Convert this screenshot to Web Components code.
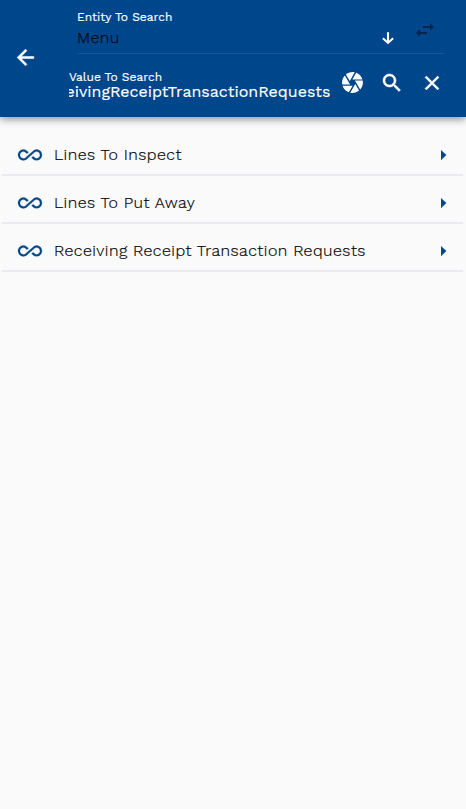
<!DOCTYPE html>
<html lang="en">
<head>
<meta charset="utf-8">
<title>Menu search</title>
<style>
html,body{margin:0;height:100%;background:#fafafa;font-family:"Work Sans",Inter,"Liberation Sans",sans-serif}
</style>
</head>
<body>
<search-page></search-page>
<script>
const ICONS = {
  back:'<path stroke="currentColor" stroke-width=".5" d="M20 11H7.83l5.59-5.59L12 4l-8 8 8 8 1.41-1.41L7.83 13H20v-2z"/>',
  down:'<path d="M12 6.2v10.6M6.9 12.2l5.1 4.7 5.1-4.7" fill="none" stroke="currentColor" stroke-width="2.1"/>',
  swap:'<path d="M6.99 11L3 15l3.99 4v-3H14v-2H6.99v-3zM21 9l-3.99-4v3H10v2h7.01v3L21 9z"/>',
  camera:'<path d="M9.4 10.5l4.77-8.26C13.47 2.09 12.75 2 12 2c-2.4 0-4.6.85-6.32 2.25l3.66 6.35.06-.1zM21.54 9c-.92-2.92-3.15-5.26-6-6.34L11.88 9h9.66zm.26 1h-7.49l.29.5 4.76 8.25C21 16.97 22 14.61 22 12c0-.69-.07-1.35-.2-2zM8.54 12l-3.9-6.75C3.01 7.03 2 9.39 2 12c0 .69.07 1.35.2 2h7.49l-1.15-2zm-6.08 3c.92 2.92 3.15 5.26 6 6.34L12.12 15H2.46zm11.27 0l-3.9 6.76c.7.15 1.42.24 2.17.24 2.4 0 4.6-.85 6.32-2.25l-3.66-6.35-.93 1.6z"/>',
  search:'<path stroke="currentColor" stroke-width=".5" d="M15.5 14h-.79l-.28-.27C15.41 12.59 16 11.11 16 9.5 16 5.91 13.09 3 9.5 3S3 5.91 3 9.5 5.91 16 9.5 16c1.61 0 3.09-.59 4.23-1.57l.27.28v.79l5 4.99L20.49 19l-4.99-5zm-6 0C7.01 14 5 11.99 5 9.5S7.01 5 9.5 5 14 7.01 14 9.5 11.99 14 9.5 14z"/>',
  close:'<path stroke="currentColor" stroke-width=".4" d="M19 6.41L17.59 5 12 10.59 6.41 5 5 6.41 10.59 12 5 17.59 6.41 19 12 13.41 17.59 19 19 17.59 13.41 12z"/>',
  infinity:'<path stroke="currentColor" stroke-width=".2" d="M18.6 6.62c-1.44 0-2.8.56-3.77 1.53L12 10.66 10.48 12h.01L7.8 14.39c-.64.64-1.49.99-2.4.99-1.87 0-3.39-1.51-3.39-3.38S3.53 8.62 5.4 8.62c.91 0 1.76.35 2.44 1.03l1.13 1 1.51-1.34L9.22 8.2C8.2 7.18 6.84 6.62 5.4 6.62 2.42 6.62 0 9.04 0 12s2.42 5.38 5.4 5.38c1.44 0 2.8-.56 3.77-1.53l2.83-2.5.01.01L13.52 12h-.01l2.69-2.39c.64-.64 1.49-.99 2.4-.99 1.87 0 3.39 1.51 3.39 3.38s-1.52 3.38-3.39 3.38c-.9 0-1.76-.35-2.44-1.03l-1.14-1.01-1.51 1.34 1.27 1.12c1.02 1.01 2.37 1.57 3.82 1.57 2.98 0 5.4-2.41 5.4-5.38s-2.42-5.37-5.4-5.37z"/>',
  caret:'<path d="M9 7v10.2l5.4-5.1z"/>'
};
function define(name, render){
  customElements.define(name, class extends HTMLElement{
    connectedCallback(){
      if(!this.shadowRoot) this.attachShadow({mode:'open'}).innerHTML = render(this);
    }
  });
}
define('ui-icon', el => `<style>
:host{display:block;flex:none;width:24px;height:24px}
svg{display:block;width:100%;height:100%;fill:currentColor;overflow:visible}
</style><svg viewBox="0 0 24 24">${ICONS[el.getAttribute('name')]}</svg>`);

define('entity-select', () => `<style>
:host{display:flex;height:53px;margin:0 22px 0 8px;border-bottom:1px solid #19549a;color:#fff}
.text{flex:1;padding-top:9px}
.label{font-size:12px;line-height:16px;-webkit-text-stroke:.15px}
.value{font-size:16px;line-height:20px;margin-top:3px;font-weight:300;letter-spacing:.44px;color:#000814;-webkit-text-stroke:.25px}
.down{margin:26px 13px 0 0}
.swap{margin:18px 7px 0 0;color:#08264b}
</style>
<div class="text"><div class="label"><slot name="label"></slot></div><div class="value"><slot></slot></div></div>
<ui-icon class="down" name="down"></ui-icon><ui-icon class="swap" name="swap"></ui-icon>`);

define('value-field', () => `<style>
:host{display:flex;height:63px;color:#fff}
.text{width:261.5px;padding-top:16px;-webkit-text-stroke:.15px}
.label{font-size:12px;line-height:14px}
.value{display:flex;justify-content:flex-end;overflow:hidden;white-space:nowrap;font-size:16px;line-height:16px}
.camera{width:25px;height:25px;margin:16px 0 0 9.5px}
.search{margin:17px 0 0 15px}
.close{margin:17px 0 0 16px}
</style>
<div class="text"><div class="label"><slot name="label"></slot></div><div class="value"><span><slot></slot></span></div></div>
<ui-icon class="camera" name="camera"></ui-icon><ui-icon class="search" name="search"></ui-icon><ui-icon class="close" name="close"></ui-icon>`);

define('search-header', () => `<style>
:host{display:flex;height:117px;background:#00468b;box-shadow:0 2px 8px rgba(0,0,0,.45);color:#fff}
.back{width:25px;height:25px;margin:44.5px 31px 0 13px}
.fields{flex:1}
</style><ui-icon class="back" name="back"></ui-icon><div class="fields"><slot></slot></div>`);

define('menu-row', () => `<style>
:host{display:flex;align-items:center;box-sizing:border-box;height:48px;padding:7px 7px 0 16px;border-bottom:2px solid #e9ebee;color:#00468b}
.text{flex:1;margin-left:12px;color:#000;font-size:16px;font-weight:300;line-height:20px;letter-spacing:.44px;white-space:nowrap;-webkit-text-stroke:.2px}
</style><ui-icon name="infinity"></ui-icon><div class="text"><slot></slot></div><ui-icon name="caret"></ui-icon>`);

define('search-page', () => `<style>
:host{display:block;min-height:100%}
.list{padding:11px 3px 0 2px}
</style>
<search-header>
<entity-select><span slot="label">Entity To Search</span>Menu</entity-select>
<value-field><span slot="label">Value To Search</span>ReceivingReceiptTransactionRequests</value-field>
</search-header>
<div class="list"><menu-row>Lines To Inspect</menu-row><menu-row>Lines To Put Away</menu-row><menu-row>Receiving Receipt Transaction Requests</menu-row></div>`);
</script>
</body>
</html>
